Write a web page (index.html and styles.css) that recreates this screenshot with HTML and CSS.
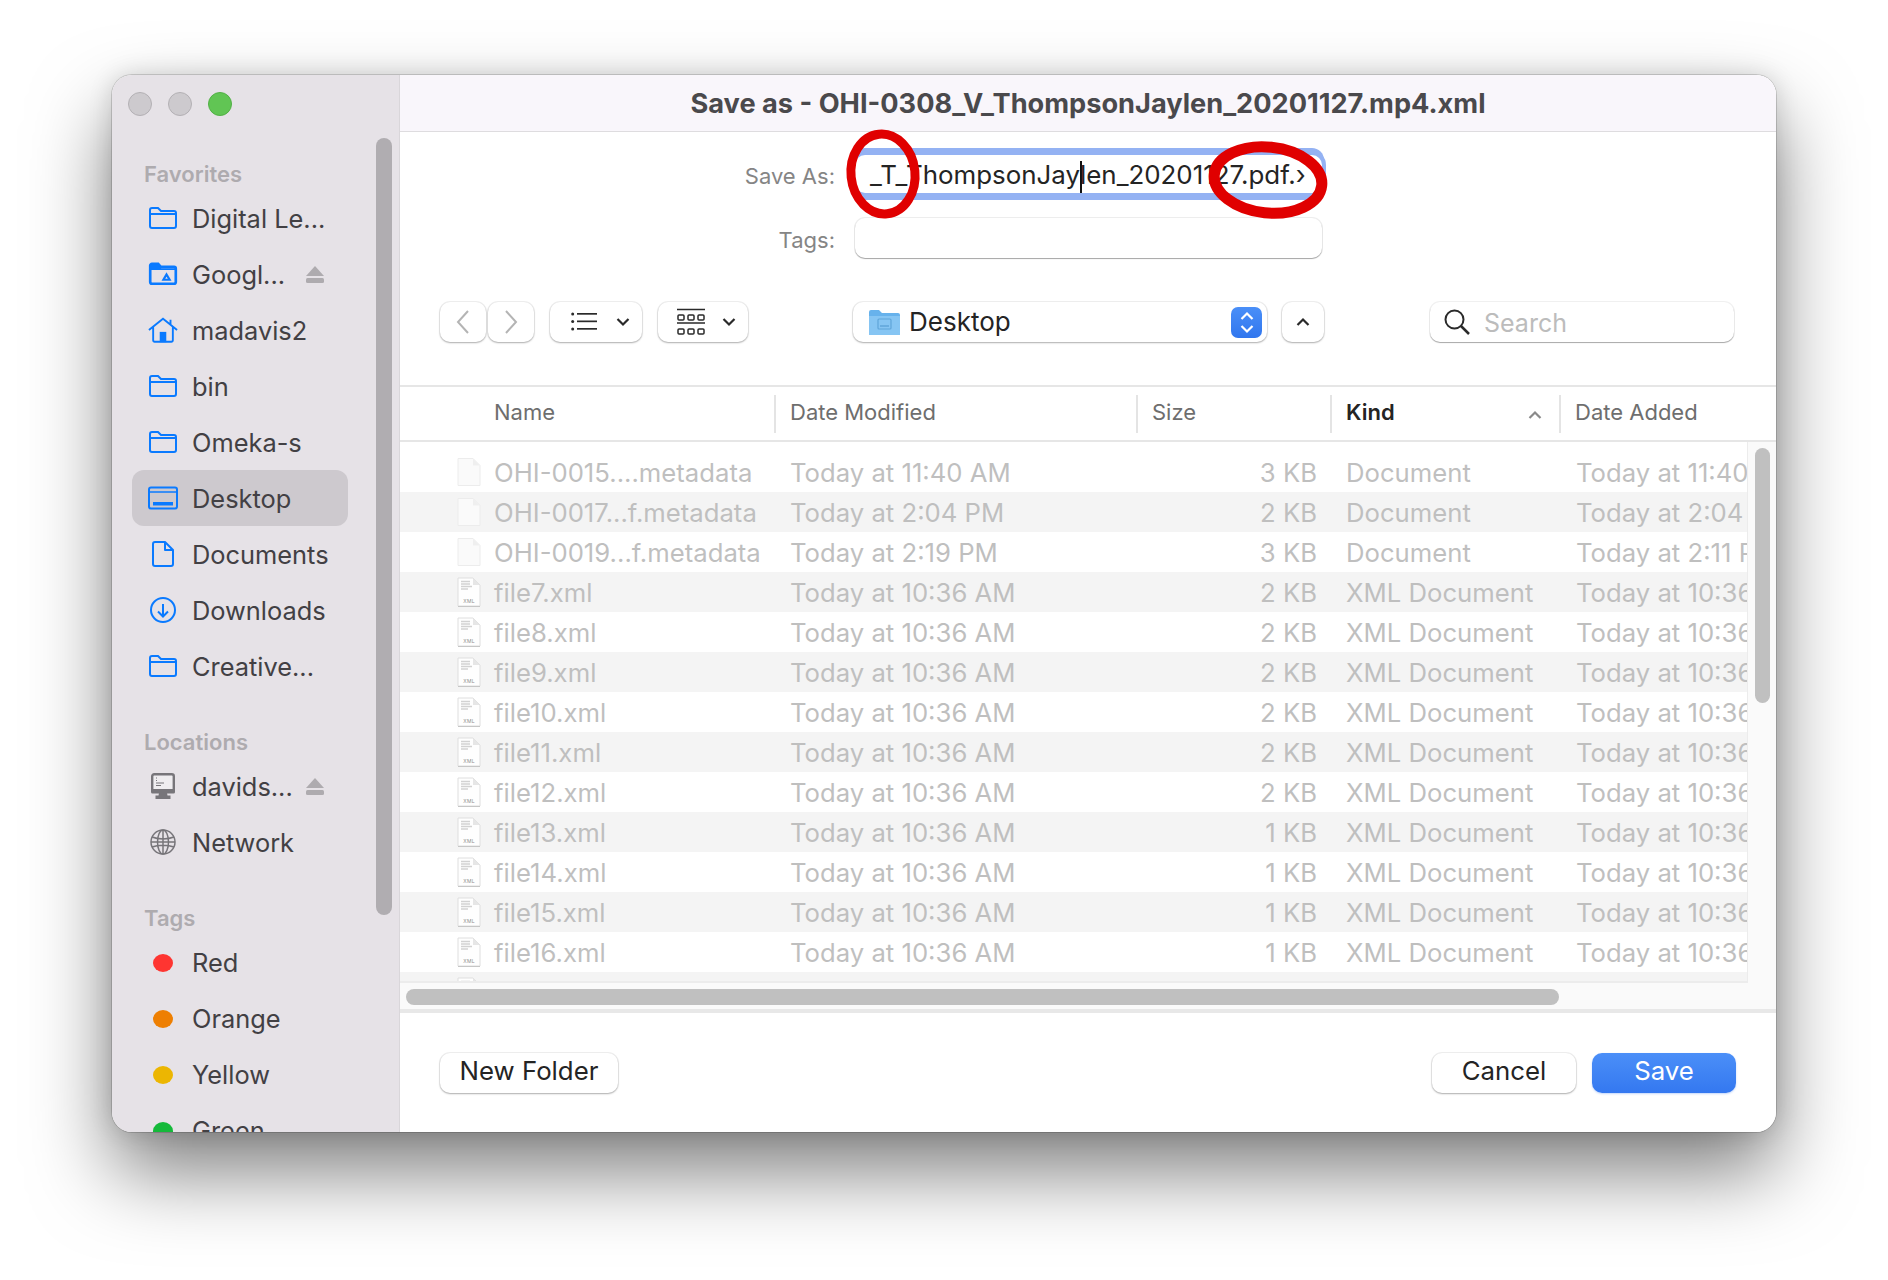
FILE: index.html
```html
<!DOCTYPE html>
<html lang="en">
<head>
  <meta charset="UTF-8">
  <title>Save as</title>
  <link rel="stylesheet" href="styles.css">
</head>
<body>
  <!-- Icon sprite -->
  <svg class="sprite" width="0" height="0">
    <symbol id="i-folder" viewBox="0 0 30 24"><path d="M2 7V4a2 2 0 0 1 2-2h6l3 3h13a2 2 0 0 1 2 2v13a2 2 0 0 1-2 2H4a2 2 0 0 1-2-2zM2 8h26" fill="none" stroke="currentColor" stroke-width="2"/></symbol>
    <symbol id="i-gdrive" viewBox="0 0 34 27"><path d="M2.500 9V4a2 2 0 0 1 2-2h7l3 3.500h15a2 2 0 0 1 2 2v15a2 2 0 0 1-2 2h-25a2 2 0 0 1-2-2z" fill="none" stroke="currentColor" stroke-width="3"/><path d="M2 3h10l3 4h16v2H2z" fill="currentColor"/><path d="M21 14l3.500 6h-7z" fill="none" stroke="currentColor" stroke-width="2.500"/></symbol>
    <symbol id="i-home" viewBox="0 0 32 28"><path d="M1 14L16 2l15 12M5.500 11v14a1.500 1.500 0 0 0 1.500 1.500h18a1.500 1.500 0 0 0 1.500-1.500V11M24 3v5" fill="none" stroke="currentColor" stroke-width="2"/><path d="M12.500 27v-11h7v11z" fill="currentColor"/></symbol>
    <symbol id="i-desktop" viewBox="0 0 30 24"><rect x="1" y="1.500" width="28" height="21" rx="2" fill="none" stroke="currentColor" stroke-width="2"/><path d="M1 6h28" stroke="currentColor" stroke-width="1.500"/><rect x="5" y="16" width="20" height="3.500" fill="currentColor"/></symbol>
    <symbol id="i-doc" viewBox="0 0 24 28"><path d="M4 2h10l8 8v14a2 2 0 0 1-2 2H4a2 2 0 0 1-2-2V4a2 2 0 0 1 2-2zM14 2v8h8" fill="none" stroke="currentColor" stroke-width="2" stroke-linejoin="round"/></symbol>
    <symbol id="i-download" viewBox="0 0 28 28"><circle cx="14" cy="14" r="12" fill="none" stroke="currentColor" stroke-width="2"/><path d="M14 8v12M9 15.500l5 5 5-5" fill="none" stroke="currentColor" stroke-width="2"/></symbol>
    <symbol id="i-computer" viewBox="0 0 30 28"><rect x="4.200" y="2.200" width="21.600" height="17.600" rx="2" fill="#efedf0" stroke="currentColor" stroke-width="2.400"/><path d="M8 6h1M8 8.500h1M8 11h8M8 13.500h5" stroke="currentColor" stroke-width="1"/><path d="M3 17h24v3a1.500 1.500 0 0 1-1.500 1.500h-21A1.500 1.500 0 0 1 3 20zM11 21h8l.5 2.500h3V27H7.500v-3.500h3z" fill="currentColor"/></symbol>
    <symbol id="i-globe" viewBox="0 0 28 28"><g fill="none" stroke="currentColor" stroke-width="1.500"><circle cx="14" cy="14" r="12"/><ellipse cx="14" cy="14" rx="5.500" ry="12"/><path d="M3 9c6 2.500 16 2.500 22 0M3 19c6-2.500 16-2.500 22 0M2 14h24M14 2v24"/></g></symbol>
    <symbol id="i-eject" viewBox="0 0 20 20"><path d="M10 2l9 10H1z" fill="currentColor"/><rect x="1" y="14" width="18" height="5" rx="1.500" fill="currentColor"/></symbol>
    <symbol id="i-chev-down" viewBox="0 0 14 10"><path d="M1.500 2l5.500 5.500L12.500 2" fill="none" stroke="currentColor" stroke-width="2.200"/></symbol>
    <symbol id="i-chev-up" viewBox="0 0 14 10"><path d="M1.500 8L7 2.500 12.500 8" fill="none" stroke="currentColor" stroke-width="2.200"/></symbol>
    <symbol id="i-blank" viewBox="0 0 26 29"><path d="M2 1h15l7 7v20H2z" fill="#fafafa" stroke="#ececec"/><path d="M17 1v7h7z" fill="#efefef"/></symbol>
    <symbol id="i-xml" viewBox="0 0 24 30"><path d="M1 1h15l7 7v21H1z" fill="#fefefe" stroke="#dedede"/><path d="M1 29.500h22" stroke="#c6c6c6"/><path d="M16 1v7h7z" fill="#e6e6e6"/><path d="M4 4.500h9M4 7h9M4 9.500h11M4 12h7" stroke="#d2d2d2" stroke-width="1.300"/><text x="12" y="25.500" text-anchor="middle" class="xml-label">XML</text></symbol>
  </svg>

  <div class="window">
    <!-- Sidebar -->
    <aside class="sidebar">
      <div class="side-scroll"></div>
      <h4 class="side-head">Favorites</h4>
      <div class="side-row"><svg class="side-icon"><use href="#i-folder"/></svg><span class="side-text">Digital Le...</span></div>
      <div class="side-row"><svg class="side-icon"><use href="#i-gdrive"/></svg><span class="side-text">Googl...</span><svg class="eject"><use href="#i-eject"/></svg></div>
      <div class="side-row"><svg class="side-icon"><use href="#i-home"/></svg><span class="side-text">madavis2</span></div>
      <div class="side-row"><svg class="side-icon"><use href="#i-folder"/></svg><span class="side-text">bin</span></div>
      <div class="side-row"><svg class="side-icon"><use href="#i-folder"/></svg><span class="side-text">Omeka-s</span></div>
      <div class="side-row selected"><svg class="side-icon"><use href="#i-desktop"/></svg><span class="side-text">Desktop</span></div>
      <div class="side-row"><svg class="side-icon"><use href="#i-doc"/></svg><span class="side-text">Documents</span></div>
      <div class="side-row"><svg class="side-icon"><use href="#i-download"/></svg><span class="side-text">Downloads</span></div>
      <div class="side-row"><svg class="side-icon"><use href="#i-folder"/></svg><span class="side-text">Creative...</span></div>
      <h4 class="side-head spaced">Locations</h4>
      <div class="side-row"><svg class="side-icon gray"><use href="#i-computer"/></svg><span class="side-text">davids...</span><svg class="eject"><use href="#i-eject"/></svg></div>
      <div class="side-row"><svg class="side-icon gray"><use href="#i-globe"/></svg><span class="side-text">Network</span></div>
      <h4 class="side-head spaced">Tags</h4>
      <div class="side-row"><span class="tag-slot"><i class="tag red"></i></span><span class="side-text">Red</span></div>
      <div class="side-row"><span class="tag-slot"><i class="tag orange"></i></span><span class="side-text">Orange</span></div>
      <div class="side-row"><span class="tag-slot"><i class="tag yellow"></i></span><span class="side-text">Yellow</span></div>
      <div class="side-row"><span class="tag-slot"><i class="tag green"></i></span><span class="side-text">Green</span></div>
    </aside>

    <!-- Traffic lights -->
    <div class="lights"><i class="light"></i><i class="light"></i><i class="light on"></i></div>

    <main class="main">
      <div class="titlebar">Save as - OHI-0308_V_ThompsonJaylen_20201127.mp4.xml</div>

      <div class="form-row first">
        <label class="form-label">Save As:</label>
        <div class="field focus">_T_ThompsonJay<span class="caret"></span>len_20201127.pdf.›</div>
      </div>
      <div class="form-row second">
        <label class="form-label">Tags:</label>
        <div class="field tags"></div>
      </div>

      <!-- Toolbar -->
      <div class="toolbar">
        <div class="btn nav"><svg width="18" height="28" viewBox="0 0 18 28"><path d="M14 3L4 14l10 11" fill="none" stroke="#b4b4b4" stroke-width="2"/></svg></div>
        <div class="btn nav next"><svg width="18" height="28" viewBox="0 0 18 28"><path d="M4 3l10 11L4 25" fill="none" stroke="#b4b4b4" stroke-width="2"/></svg></div>
        <div class="btn view list-view">
          <svg width="26" height="20" viewBox="0 0 26 20"><g fill="#2a2a2a"><circle cx="1.700" cy="2" r="1.500"/><circle cx="1.700" cy="9.500" r="1.500"/><circle cx="1.700" cy="17" r="1.500"/><rect x="6" y="1" width="20" height="1.700"/><rect x="6" y="8.500" width="20" height="1.700"/><rect x="6" y="16" width="20" height="1.700"/></g></svg>
          <svg class="chev"><use href="#i-chev-down"/></svg>
        </div>
        <div class="btn view grid-view">
          <svg width="28" height="28" viewBox="0 0 28 28"><g fill="none" stroke="#2a2a2a" stroke-width="1.500"><path d="M0 1.500h28M0 15h28"/><rect x="1" y="7" width="6" height="5" rx="1"/><rect x="11" y="7" width="6" height="5" rx="1"/><rect x="21" y="7" width="6" height="5" rx="1"/><rect x="1" y="21" width="6" height="5" rx="1"/><rect x="11" y="21" width="6" height="5" rx="1"/><rect x="21" y="21" width="6" height="5" rx="1"/></g></svg>
          <svg class="chev"><use href="#i-chev-down"/></svg>
        </div>
        <div class="btn path">
          <svg width="31" height="28" viewBox="0 0 31 28"><path d="M0 4a2 2 0 0 1 2-2h8l3 3h16a2 2 0 0 1 2 2v19a1 1 0 0 1-1 1H1a1 1 0 0 1-1-1z" fill="#67b2ec"/><path d="M0 8h31v18a1 1 0 0 1-1 1H1a1 1 0 0 1-1-1z" fill="#86c5f3"/><rect x="9" y="11" width="13" height="10" rx="1" fill="none" stroke="#5fa5da" stroke-width="1.200"/><path d="M11 18h9" stroke="#5fa5da" stroke-width="1.500"/></svg>
          <span class="path-name">Desktop</span>
          <span class="stepper">
            <svg width="14" height="10"><use href="#i-chev-up"/></svg>
            <svg width="14" height="10"><use href="#i-chev-down"/></svg>
          </span>
        </div>
        <div class="btn up"><svg width="14" height="10"><use href="#i-chev-up"/></svg></div>
        <div class="search">
          <svg width="28" height="28" viewBox="0 0 28 28"><circle cx="11.500" cy="11.500" r="9" fill="none" stroke="#2a2a2a" stroke-width="2"/><path d="M18 18l8 8" stroke="#2a2a2a" stroke-width="2.500"/></svg>
          <span class="search-text">Search</span>
        </div>
      </div>

      <!-- Column headers -->
      <div class="head-row">
        <div class="head-cell first">Name</div>
        <div class="head-cell">Date Modified</div>
        <div class="head-cell">Size</div>
        <div class="head-cell active">Kind<svg class="sort"><use href="#i-chev-up"/></svg></div>
        <div class="head-cell">Date Added</div>
      </div>

      <!-- File list -->
      <div class="list-wrap">
        <div class="list">
          <div class="row"><svg class="file-icon"><use href="#i-blank"/></svg><span>OHI-0015....metadata</span><span>Today at 11:40 AM</span><span class="size">3 KB</span><span>Document</span><span class="clip">Today at 11:40 AM</span></div>
          <div class="row"><svg class="file-icon"><use href="#i-blank"/></svg><span>OHI-0017...f.metadata</span><span>Today at 2:04 PM</span><span class="size">2 KB</span><span>Document</span><span class="clip">Today at 2:04 PM</span></div>
          <div class="row"><svg class="file-icon"><use href="#i-blank"/></svg><span>OHI-0019...f.metadata</span><span>Today at 2:19 PM</span><span class="size">3 KB</span><span>Document</span><span class="clip">Today at 2:11 PM</span></div>
          <div class="row"><svg class="file-icon xml"><use href="#i-xml"/></svg><span>file7.xml</span><span>Today at 10:36 AM</span><span class="size">2 KB</span><span>XML Document</span><span class="clip">Today at 10:36 AM</span></div>
          <div class="row"><svg class="file-icon xml"><use href="#i-xml"/></svg><span>file8.xml</span><span>Today at 10:36 AM</span><span class="size">2 KB</span><span>XML Document</span><span class="clip">Today at 10:36 AM</span></div>
          <div class="row"><svg class="file-icon xml"><use href="#i-xml"/></svg><span>file9.xml</span><span>Today at 10:36 AM</span><span class="size">2 KB</span><span>XML Document</span><span class="clip">Today at 10:36 AM</span></div>
          <div class="row"><svg class="file-icon xml"><use href="#i-xml"/></svg><span>file10.xml</span><span>Today at 10:36 AM</span><span class="size">2 KB</span><span>XML Document</span><span class="clip">Today at 10:36 AM</span></div>
          <div class="row"><svg class="file-icon xml"><use href="#i-xml"/></svg><span>file11.xml</span><span>Today at 10:36 AM</span><span class="size">2 KB</span><span>XML Document</span><span class="clip">Today at 10:36 AM</span></div>
          <div class="row"><svg class="file-icon xml"><use href="#i-xml"/></svg><span>file12.xml</span><span>Today at 10:36 AM</span><span class="size">2 KB</span><span>XML Document</span><span class="clip">Today at 10:36 AM</span></div>
          <div class="row"><svg class="file-icon xml"><use href="#i-xml"/></svg><span>file13.xml</span><span>Today at 10:36 AM</span><span class="size">1 KB</span><span>XML Document</span><span class="clip">Today at 10:36 AM</span></div>
          <div class="row"><svg class="file-icon xml"><use href="#i-xml"/></svg><span>file14.xml</span><span>Today at 10:36 AM</span><span class="size">1 KB</span><span>XML Document</span><span class="clip">Today at 10:36 AM</span></div>
          <div class="row"><svg class="file-icon xml"><use href="#i-xml"/></svg><span>file15.xml</span><span>Today at 10:36 AM</span><span class="size">1 KB</span><span>XML Document</span><span class="clip">Today at 10:36 AM</span></div>
          <div class="row"><svg class="file-icon xml"><use href="#i-xml"/></svg><span>file16.xml</span><span>Today at 10:36 AM</span><span class="size">1 KB</span><span>XML Document</span><span class="clip">Today at 10:36 AM</span></div>
          <div class="row"><svg class="file-icon xml"><use href="#i-xml"/></svg></div>
        </div>
        <div class="vgutter"><div class="vthumb"></div></div>
      </div>
      <div class="hgutter"><div class="hthumb"></div></div>

      <!-- Bottom buttons -->
      <div class="footer">
        <div class="btn plain new-folder">New Folder</div>
        <div class="footer-right">
          <div class="btn plain action">Cancel</div>
          <div class="btn action save">Save</div>
        </div>
      </div>
    </main>
  </div>

  <!-- Hand drawn red circles over the filename -->
  <svg class="marks" width="1888" height="1280" viewBox="0 0 1888 1280">
    <ellipse cx="883" cy="174" rx="32" ry="40" transform="rotate(-6 883 174)"/>
    <ellipse class="wide" cx="1268" cy="180" rx="54" ry="33" transform="rotate(6 1268 180)"/>
  </svg>
</body>
</html>
```

FILE: styles.css
```css
/* General styles */
body {
  margin: 0;
  padding: 75px 0 0 112px;
  height: 1280px;
  box-sizing: border-box;
  overflow: hidden;
  background: #fff;
  font-family: Inter, "Liberation Sans", sans-serif;
  font-size: 25px;
  color: #242424;
}

/* Drop shadow sits behind the window */
body::before {
  content: "";
  position: absolute;
  left: 112px;
  top: 75px;
  width: 1664px;
  height: 1057px;
  border-radius: 20px;
  box-shadow: 0 40px 80px rgba(0, 0, 0, 0.5), 0 0 24px rgba(0, 0, 0, 0.14);
}

.sprite {
  position: absolute;
}

/* Window */
.window {
  position: relative;
  display: flex;
  width: 1664px;
  height: 1057px;
  border-radius: 20px;
  overflow: hidden;
  box-shadow: 0 0 0 1px rgba(0, 0, 0, 0.15);
}

/* Traffic lights */
.lights {
  position: absolute;
  left: 16px;
  top: 17px;
  display: flex;
  gap: 16px;
}

.light {
  width: 22px;
  height: 22px;
  border-radius: 50%;
  background: #cdcace;
  border: 1px solid #b3b0b4;
}

.light.on {
  background: #61c554;
  border-color: #52b046;
}

/* Sidebar */
.sidebar {
  position: relative;
  box-sizing: border-box;
  width: 288px;
  flex: none;
  padding: 85px 0 0 20px;
  background: #e6e2e7;
  border-right: 1px solid #d9d6da;
  overflow: hidden;
}

.side-scroll {
  position: absolute;
  left: 264px;
  top: 63px;
  width: 16px;
  height: 777px;
  border-radius: 8px;
  background: #b0adb1;
}

.side-head {
  margin: 0 0 2px 12px;
  height: 28px;
  line-height: 29px;
  font-size: 22px;
  font-weight: 600;
  color: #aeabaf;
}

.side-head.spaced {
  margin-top: 33px;
  margin-bottom: 3px;
  line-height: 30px;
}

.side-row {
  display: flex;
  align-items: center;
  box-sizing: border-box;
  width: 216px;
  height: 56px;
  padding-left: 16px;
  border-radius: 12px;
  font-size: 25.400px;
  color: #424044;
}

.side-row.selected {
  background: #cdc9ce;
}

.side-icon {
  width: 30px;
  height: 28px;
  flex: none;
  margin-right: 14px;
  color: #0a7aff;
}

.side-icon.gray {
  color: #77757a;
}

.side-text {
  flex: 1;
  white-space: nowrap;
}

.eject {
  width: 20px;
  height: 20px;
  margin-right: 23px;
  color: #aeabaf;
}

.tag-slot {
  display: flex;
  justify-content: center;
  width: 30px;
  margin: 2px 14px 0 0;
  flex: none;
}

.tag {
  width: 20px;
  height: 18px;
  border-radius: 50%;
}

.red { background: #fe3531; }
.orange { background: #ee7f02; }
.yellow { background: #ecb602; }
.green { background: #15b93a; }

/* Main panel */
.main {
  display: flex;
  flex-direction: column;
  flex: 1;
  min-width: 0;
  background: #fff;
}

.titlebar {
  flex: none;
  box-sizing: border-box;
  height: 57px;
  line-height: 57px;
  text-align: center;
  font-weight: 700;
  font-size: 27.200px;
  color: #4a494c;
  background: #f9f6fb;
  border-bottom: 1px solid #dedcdf;
}

/* Save As and Tags */
.form-row {
  display: flex;
  align-items: center;
  flex: none;
}

.form-row.first {
  height: 38px;
  margin-top: 23px;
}

.form-row.second {
  height: 40px;
  margin-top: 25px;
}

.form-label {
  width: 435px;
  margin: 3px 20px 0 0;
  text-align: right;
  font-size: 22px;
  color: #858585;
}

.field {
  box-sizing: border-box;
  width: 467px;
  height: 100%;
  background: #fff;
  border-radius: 10px;
  white-space: nowrap;
}

.field.focus {
  padding-left: 15px;
  line-height: 40px;
  font-size: 25.900px;
  box-shadow: 0 -5px 0 2px #94b2f3, 0 5px 0 2px #94b2f3, 0 0 0 4px #94b2f3;
}

.field.tags {
  box-shadow: 0 0 0 1px rgba(0, 0, 0, 0.07), 0 1px 1px rgba(0, 0, 0, 0.3);
}

.caret {
  display: inline-block;
  width: 2px;
  height: 32px;
  margin-right: -2px;
  background: #111;
  vertical-align: middle;
}

/* Toolbar */
.toolbar {
  display: flex;
  flex: none;
  height: 40px;
  margin-top: 44px;
  padding-left: 40px;
}

.btn {
  display: flex;
  align-items: center;
  justify-content: center;
  box-sizing: border-box;
  background: #fff;
  border-radius: 10px;
  box-shadow: 0 0 0 1px rgba(0, 0, 0, 0.06), 0 1px 2px rgba(0, 0, 0, 0.28);
}

.nav {
  width: 46px;
}

.nav.next {
  margin-left: 2px;
}

.view {
  margin-left: 16px;
  height: 40px;
}

.list-view {
  gap: 19px;
  width: 92px;
  padding-left: 9px;
}

.grid-view {
  gap: 17px;
  width: 90px;
  padding-left: 6px;
}

.chev {
  width: 14px;
  height: 10px;
  color: #2a2a2a;
}

.path {
  justify-content: flex-start;
  width: 414px;
  margin-left: 105px;
  padding: 0 5px 0 16px;
}

.path-name {
  flex: 1;
  margin-left: 9px;
  padding-bottom: 2px;
  font-size: 26px;
}

.stepper {
  display: flex;
  flex-direction: column;
  align-items: center;
  justify-content: center;
  gap: 3px;
  width: 31px;
  height: 31px;
  border-radius: 7px;
  color: #fff;
  background: linear-gradient(#4a8ff8, #3076ee);
}

.up {
  width: 42px;
  margin-left: 15px;
  color: #2a2a2a;
}

.search {
  display: flex;
  align-items: center;
  box-sizing: border-box;
  width: 304px;
  height: 40px;
  margin-left: 106px;
  padding-left: 13px;
  border-radius: 10px;
  box-shadow: 0 0 0 1px rgba(0, 0, 0, 0.06), 0 1px 1px rgba(0, 0, 0, 0.3);
}

.search-text {
  margin-left: 13px;
  padding-top: 2px;
  color: #bcbcbc;
}

/* Column headers */
.head-row {
  display: grid;
  grid-template-columns: 374px 362px 194px 229px 1fr;
  align-items: center;
  flex: none;
  box-sizing: border-box;
  height: 57px;
  margin-top: 43px;
  border-top: 2px solid #e6e6e6;
  border-bottom: 2px solid #e6e6e6;
  font-size: 22px;
  color: #6e6e6e;
}

.head-cell {
  display: flex;
  align-items: center;
  box-sizing: border-box;
  height: 38px;
  padding: 0 0 3px 14px;
  border-left: 2px solid #e4e4e4;
}

.head-cell.first {
  padding-left: 94px;
  border-left: 0;
}

.head-cell.active {
  position: relative;
  font-weight: 600;
  color: #242424;
}

.sort {
  position: absolute;
  right: 17px;
  top: 15px;
  width: 14px;
  height: 10px;
  color: #8a8a8a;
}

/* File list */
.list-wrap {
  display: flex;
  flex: none;
  height: 541px;
  background: #fafafa;
}

.list {
  width: 1347px;
  height: 529px;
  padding-top: 10px;
  background: #fff;
  overflow: hidden;
  border-right: 1px solid #ececec;
  border-bottom: 2px solid #ececec;
}

.row {
  display: grid;
  grid-template-columns: 94px 296px 362px 194px 230px 1fr;
  align-items: center;
  height: 40px;
  font-size: 25.700px;
  white-space: nowrap;
  color: #bfbfbf;
}

.row:nth-child(even) {
  background: #f4f4f4;
}

.size {
  padding-right: 29px;
  text-align: right;
}

.clip {
  overflow: hidden;
}

.file-icon {
  width: 26px;
  height: 30px;
  margin-left: 56px;
}

.file-icon.xml {
  width: 24px;
  margin-left: 57px;
}

.xml-label {
  font-size: 5px;
  letter-spacing: 0.3px;
  fill: #8c8c8c;
}

.vgutter {
  flex: 1;
}

.vthumb {
  width: 15px;
  height: 255px;
  margin: 6px 0 0 7px;
  border-radius: 8px;
  background: #c0c0c0;
}

.hgutter {
  flex: none;
  height: 30px;
  box-sizing: border-box;
  padding: 6px 0 0 6px;
  background: #fafafa;
  border-bottom: 4px solid #e8e8e8;
}

.hthumb {
  width: 1153px;
  height: 16px;
  border-radius: 8px;
  background: #c0c0c0;
}

/* Footer */
.footer {
  display: flex;
  justify-content: space-between;
  flex: none;
  height: 119px;
  box-sizing: border-box;
  padding: 40px 40px 0 40px;
}

.footer-right {
  display: flex;
  gap: 16px;
}

.plain,
.action {
  height: 40px;
  padding-bottom: 6px;
  font-size: 25.800px;
}

.new-folder {
  width: 178px;
}

.action {
  width: 144px;
}

.save {
  color: #fff;
  background: linear-gradient(#4b8ff8, #3478f0);
  box-shadow: 0 1px 2px rgba(52, 120, 240, 0.3);
}

/* Red annotation */
.marks {
  position: absolute;
  left: 0;
  top: 0;
  pointer-events: none;
}

.marks ellipse {
  fill: none;
  stroke: #e00000;
  stroke-width: 9;
}

.marks ellipse.wide {
  stroke-width: 11;
}
```
